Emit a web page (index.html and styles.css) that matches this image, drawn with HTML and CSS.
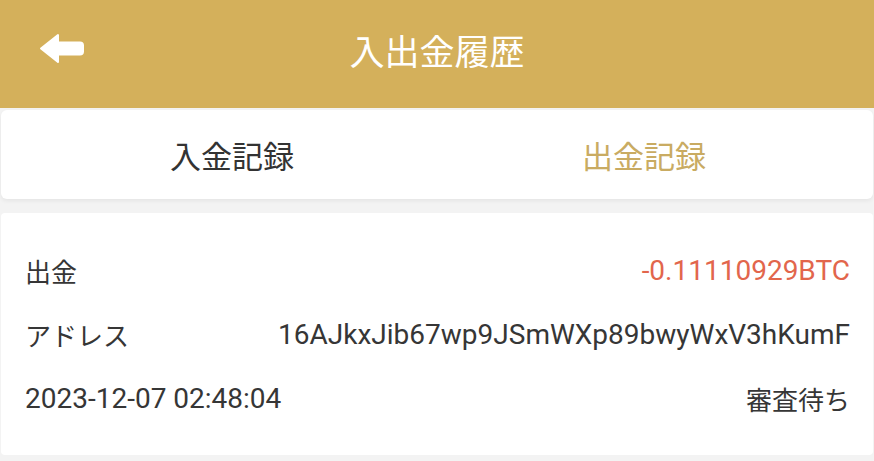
FILE: index.html
```html
<!DOCTYPE html>
<html lang="ja">
<head>
    <meta charset="UTF-8">
    <meta name="viewport" content="width=device-width, initial-scale=1.0">
    <title>入出金履歴</title>
    <link rel="stylesheet" href="styles.css">
</head>
<body>

<div class="cabecalho">
    <a class="voltar" href="#">
        <svg width="45" height="31" viewBox="0 0 45 31">
            <path d="M2 15.5 L19 2 L19 9.5 L41 9.5 Q44 9.5 44 12.5 L44 18.5 Q44 21.5 41 21.5 L19 21.5 L19 29 Z" fill="#fff" stroke="#fff" stroke-width="2" stroke-linejoin="round"/>
        </svg>
    </a>
    <h1>入出金履歴</h1>
</div>

<div class="abas">
    <div class="aba">入金記録</div>
    <div class="aba ativa">出金記録</div>
</div>

<div class="registro">
    <div class="linha">
        <span class="jp">出金</span>
        <span class="valor">-0.11110929BTC</span>
    </div>
    <div class="linha">
        <span class="jp">アドレス</span>
        <span>16AJkxJib67wp9JSmWXp89bwyWxV3hKumF</span>
    </div>
    <div class="linha">
        <span>2023-12-07 02:48:04</span>
        <span class="jp">審査待ち</span>
    </div>
</div>

</body>
</html>
```

FILE: styles.css
```css
/* Estilos da pagina de historico */
body {
    margin: 0;
    background-color: #f3f3f3;
    font-family: Roboto, "Noto Sans CJK JP", sans-serif;
    color: #363636;
}
.cabecalho {
    height: 108px;
    background-color: #d4b05b;
    display: flex;
    align-items: center;
    justify-content: center;
    padding-bottom: 10px;
    box-sizing: border-box;
    position: relative;
}
.cabecalho h1 {
    margin: 0;
    color: #fff;
    font-size: 35px;
    font-weight: normal;
}
.voltar {
    position: absolute;
    left: 39px;
    top: 33px;
    display: block;
    line-height: 0;
}
.abas {
    margin: 2px 1px 0;
    height: 89px;
    background-color: #fff;
    border-radius: 6px;
    box-shadow: 0 2px 4px rgba(0, 0, 0, 0.06);
    display: grid;
    grid-template-columns: 1fr 1fr;
    padding: 0 23px 0 25px;
}
.aba {
    display: flex;
    align-items: center;
    justify-content: center;
    font-size: 31px;
    color: #333;
}
.aba.ativa {
    color: #c9ab62;
}
.registro {
    margin: 14px 1px 0;
    background-color: #fff;
    border-radius: 4px;
    padding: 25px 23px 25px 24px;
}
.linha {
    height: 64px;
    display: flex;
    align-items: center;
    justify-content: space-between;
    font-size: 28px;
}
.linha .jp {
    font-size: 26px;
}
.valor {
    color: #e2664c;
}
```
